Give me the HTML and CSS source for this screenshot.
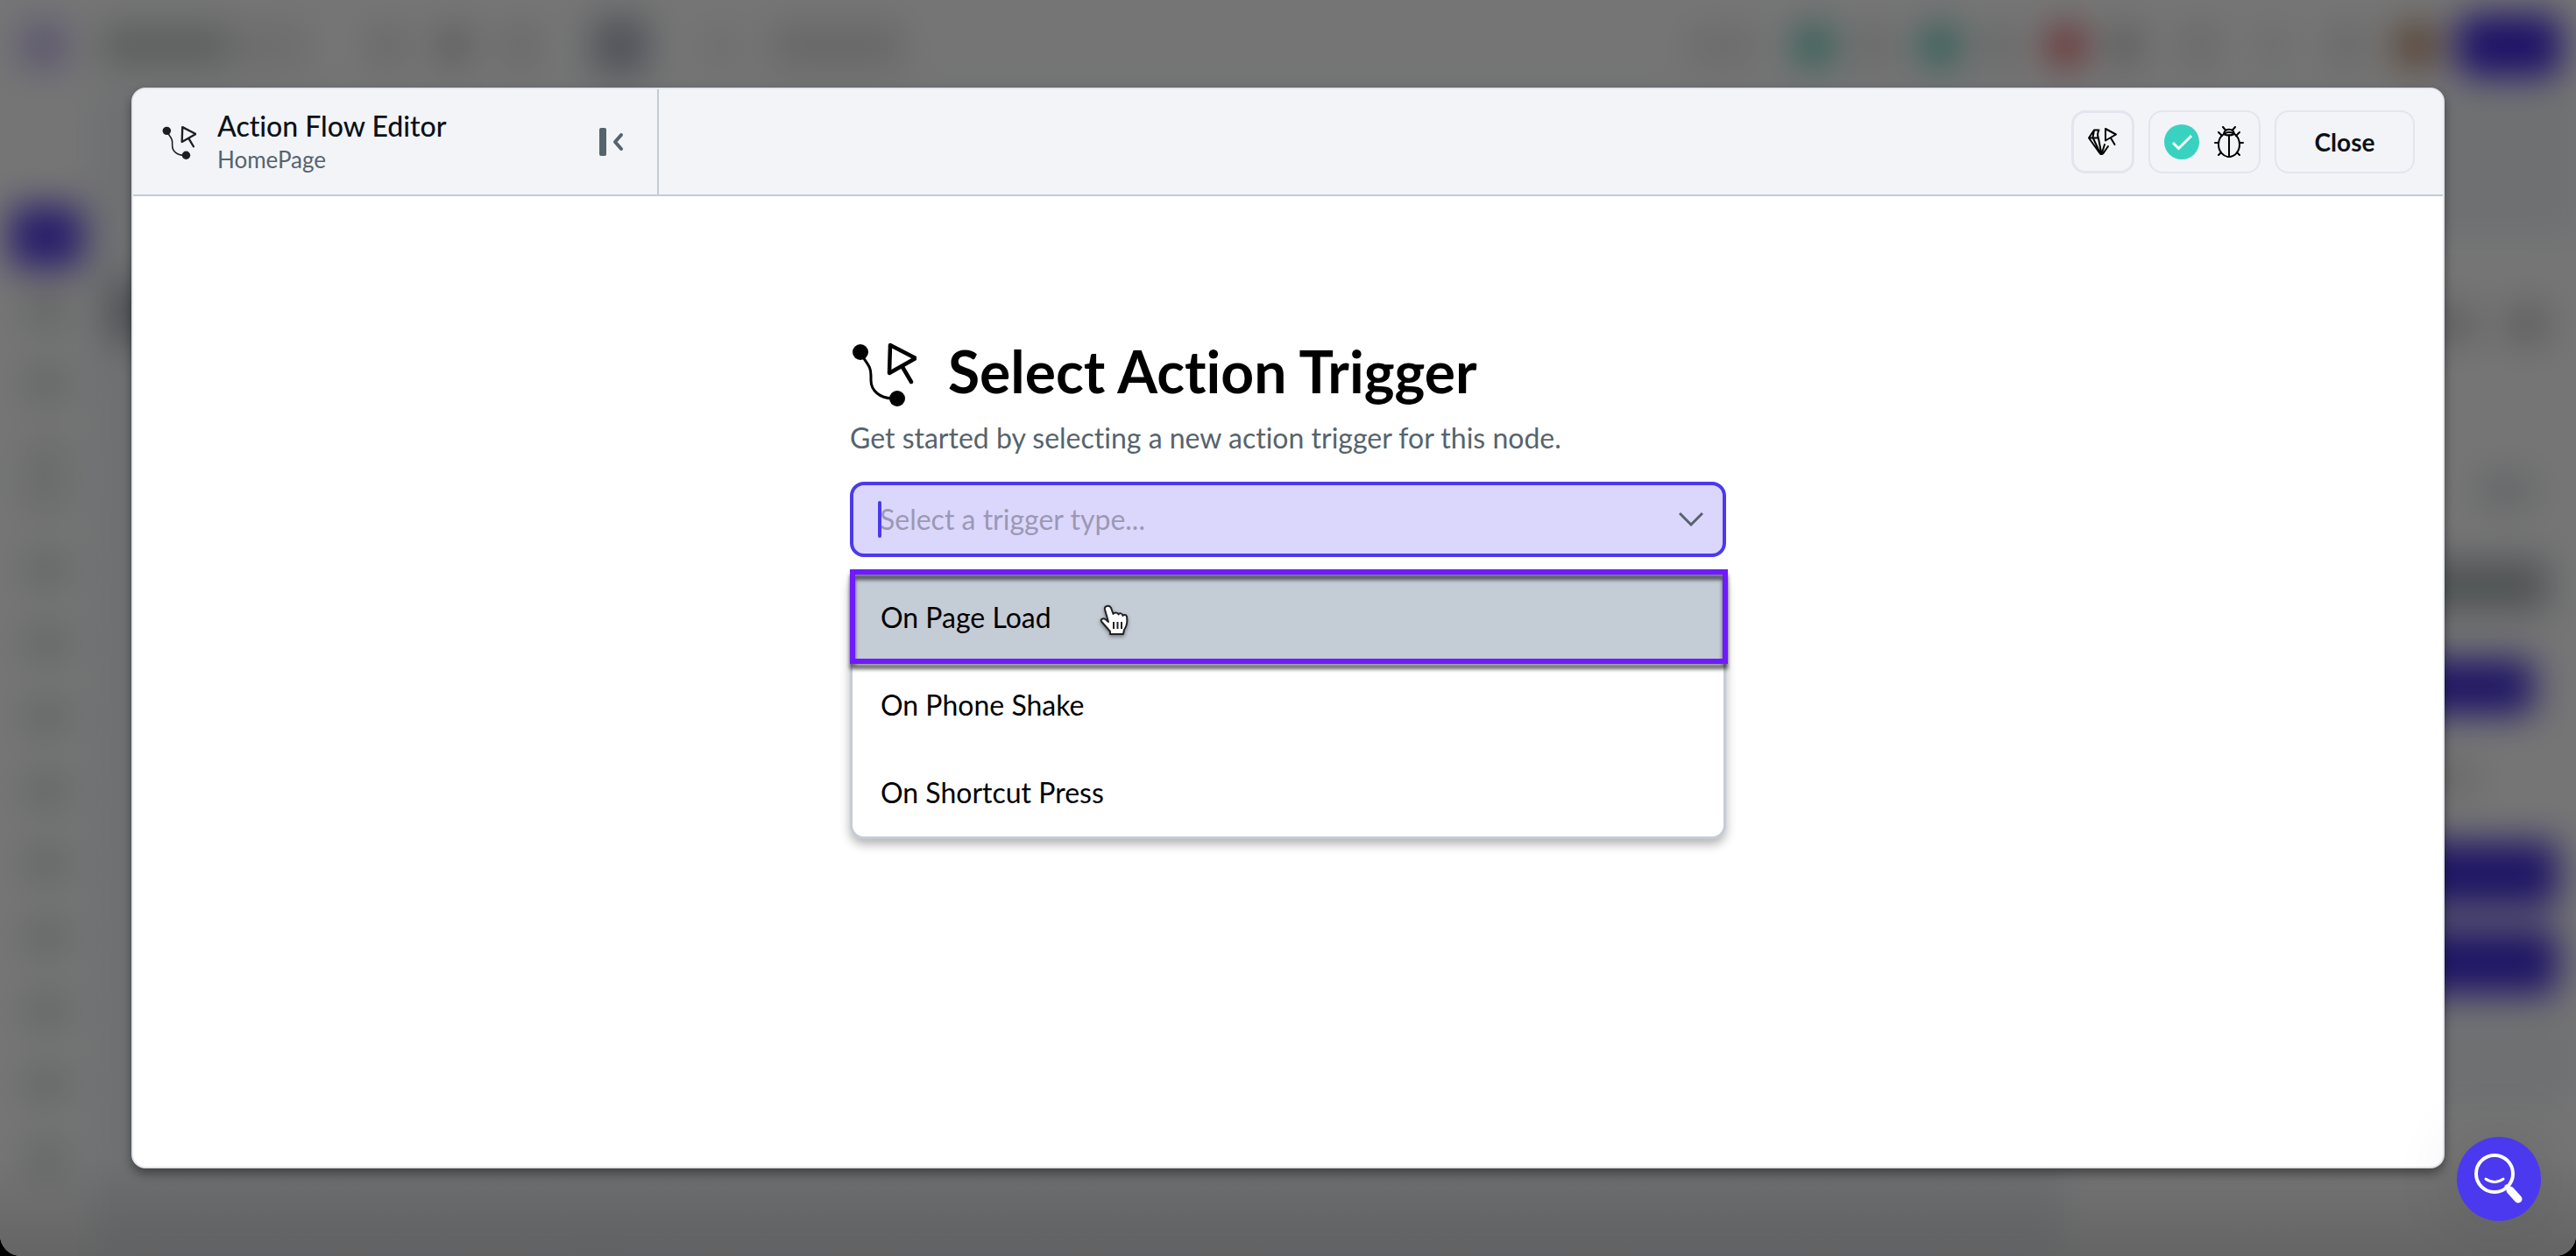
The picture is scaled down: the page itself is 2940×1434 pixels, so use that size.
FILE: index.html
```html
<!DOCTYPE html>
<html lang="en">
<head>
<meta charset="utf-8">
<meta name="viewport" content="width=device-width, initial-scale=1">
<title>Action Flow Editor</title>
<link rel="stylesheet" href="styles.css">
</head>
<body>
<svg class="sprite" aria-hidden="true">
  <symbol id="flow" viewBox="0 0 76 76">
    <circle cx="12" cy="14" r="9" fill="currentColor"/>
    <circle cx="54" cy="67" r="9" fill="currentColor"/>
    <path d="M15 20C22 30 24 32 24 41V46C24 58 34 67 50 67" fill="none" stroke="currentColor" stroke-width="3"/>
    <path d="M46 6L45 38L75 21Z M60 31L70 48" fill="none" stroke="currentColor" stroke-width="4.500" stroke-linejoin="round" stroke-linecap="round"/>
  </symbol>
</svg>
<div class="window">
  <div class="app" aria-hidden="true">
    <div class="topbar">
      <div class="bar-group">
        <i class="logo"></i><i class="name"></i><i class="tool"></i><i class="tool dark"></i><i class="tool"></i><i class="tool selected"></i><i class="tool faint"></i><i class="device"></i>
      </div>
      <div class="bar-group right">
        <i class="zoom"></i><i class="dot green"></i><i class="tool"></i><i class="dot green"></i><i class="tool"></i><i class="dot red"></i><i class="tool dark"></i><i class="tool spread"></i><i class="tool faint spread"></i><i class="tool spread"></i><i class="dot avatar"></i><i class="run"></i>
      </div>
    </div>
    <div class="workspace">
      <div class="rail">
        <i class="active"></i><i></i><i></i><i class="tall"></i><i></i><i></i><i></i><i></i><i></i><i></i><i></i><i></i><i></i>
      </div>
      <div class="tree"><i></i></div>
      <div class="canvas"></div>
      <div class="props">
        <div class="props-head"></div>
        <div class="props-icons"><i></i><i></i></div>
        <i class="hint"></i>
        <i class="tab"></i>
        <i class="action short"></i>
        <i class="note"></i>
        <i class="action"></i>
        <i class="action"></i>
        <div class="props-foot"></div>
      </div>
    </div>
  </div>
  <div class="scrim">
    <section class="modal" role="dialog" aria-labelledby="editor-title">
      <header class="modal-head">
        <div class="head-side">
          <svg class="flow-small"><use href="#flow"/></svg>
          <div class="titles">
            <h1 id="editor-title">Action Flow Editor</h1>
            <p>HomePage</p>
          </div>
          <button class="collapse" type="button" aria-label="Collapse panel">
            <svg viewBox="0 0 32 36"><rect x="2" y="2" width="8" height="32" rx="2" fill="currentColor"/><path d="M27 10L20 18L27 26" fill="none" stroke="currentColor" stroke-width="4" stroke-linecap="round" stroke-linejoin="round"/></svg>
          </button>
        </div>
        <div class="head-actions">
          <button class="tile square" type="button" aria-label="Generate action">
            <svg viewBox="0 0 36 36" fill="none" stroke="currentColor" stroke-width="2" stroke-linecap="round" stroke-linejoin="round"><path d="M13.500 4.500H8L2 13.500L14.500 31Q16.500 33 18.500 31L24 23M2 13.500H13M8 4.500L6.500 13L15.500 32M13.500 4.500Q11 9 13 14L16.500 32L20 21"/><path d="M21 3V16.500L33 9.500ZM27 13.500L31.500 21"/></svg>
          </button>
          <div class="tile status">
            <svg class="check" viewBox="0 0 40 40" role="img" aria-label="No issues"><circle cx="20" cy="20" r="20" fill="#39d2c0"/><path d="M10 21L16.500 27.500L31 13" fill="none" stroke="#fff" stroke-width="3"/></svg>
            <button class="bug" type="button" aria-label="Debug">
              <svg viewBox="0 0 36 36" fill="none" stroke="currentColor" stroke-width="2" stroke-linecap="round"><ellipse cx="18" cy="21" rx="12" ry="14"/><path d="M12 9C13 2 23 2 24 9C20 11 16 11 12 9ZM18 10V35M11 1L14 4.500M25 1L22 4.500M6 7L10 11M30 7L26 11M2 19H6M30 19H34M6 33L9 30M30 33L27 30"/></svg>
            </button>
          </div>
          <button class="tile close" type="button">Close</button>
        </div>
      </header>
      <main class="trigger">
        <div class="headline">
          <svg class="flow-large"><use href="#flow"/></svg>
          <h2>Select Action Trigger</h2>
        </div>
        <label class="lead" for="trigger-type">Get started by selecting a new action trigger for this node.</label>
        <div class="combo">
          <div class="field">
            <input id="trigger-type" type="text" role="combobox" aria-expanded="true" aria-controls="trigger-list" placeholder="Select a trigger type...">
            <span class="caret"></span>
            <svg class="chevron" viewBox="0 0 28 16"><path d="M1 1L14 14L27 1" fill="none" stroke="currentColor" stroke-width="3"/></svg>
          </div>
          <div class="menu" id="trigger-list" role="listbox">
            <button class="option hovered" type="button" role="option">On Page Load</button>
            <button class="option" type="button" role="option">On Phone Shake</button>
            <button class="option" type="button" role="option">On Shortcut Press</button>
            <span class="marker"></span>
            <svg class="pointer" viewBox="0 0 34 38"><path d="M9.500 2C7.500 2 6.500 4 7 6L11 20L7.500 17C5 15.500 1.500 17 3 19.500L13 31V34H28L29 29C32 25 33 20 32 14C31.500 11.500 28 11.500 27.500 13C27 10 23.500 9.500 22.500 11.500C21.500 9 18 9 16.500 11L14 4C13 2 11 1.500 9.500 2Z" fill="#fff" stroke="#222" stroke-width="2" stroke-linejoin="round"/><path d="M17 20V28M21.500 20V28M26 20V28" stroke="#222" stroke-width="2"/></svg>
          </div>
        </div>
      </main>
    </section>
  </div>
  <button class="help" type="button" aria-label="Search help">
    <svg viewBox="0 0 96 96" fill="none" stroke="#fff" stroke-linecap="round"><circle cx="43" cy="42" r="21" stroke-width="4"/><path d="M33 48Q43 55 53 48" stroke-width="3"/><path d="M57 57L60 60" stroke-width="5"/><path d="M61 61L70 71" stroke-width="9"/></svg>
  </button>
</div>
</body>
</html>
```
FILE: styles.css
```css
* { box-sizing: border-box; }

html { background: #000; }

body {
  margin: 0;
  font-family: Lato, "Open Sans", sans-serif;
  font-variant-ligatures: none;
  color: #0b1116;
}

h1, h2, p { margin: 0; }

button {
  padding: 0;
  border: 0;
  background: none;
  color: inherit;
  font: inherit;
  cursor: pointer;
}

svg { display: block; flex: none; }

.sprite { position: absolute; width: 0; height: 0; }

.window {
  position: relative;
  display: grid;
  min-height: 100vh;
  border-radius: 0 0 24px 24px;
  overflow: hidden;
  background: #fff;
}

.app, .scrim { grid-area: 1 / 1; min-width: 0; }

/* Application behind the dialog */
.app {
  display: flex;
  flex-direction: column;
  filter: blur(20px);
}

.app i { display: block; flex: none; }

.topbar {
  display: flex;
  justify-content: space-between;
  height: 104px;
  padding: 0 16px 0 24px;
}

.bar-group { display: flex; align-items: center; gap: 40px; }
.bar-group.right { gap: 26px; }
.logo { width: 52px; height: 52px; background: #c9bdf2; }
.name { width: 236px; height: 50px; margin-right: 32px; background: linear-gradient(90deg, #ccd0d0 60%, #ececec 60%); }
.tool { width: 36px; height: 40px; background: #dcdcdc; }
.tool.dark { background: #c4c4c4; }
.tool.faint { background: #ececec; }
.tool.selected { width: 64px; height: 64px; margin: 0 24px; background: #afb5c2; }
.device { width: 150px; height: 50px; background: #e2e2e2; }
.zoom { width: 76px; height: 36px; margin-right: 16px; background: #e6e6e6; }
.dot { width: 48px; height: 48px; border-radius: 50%; }
.green { background: #62ccba; }
.right .tool + .dot { margin-left: 8px; }
.right .spread { margin-left: 22px; }
.dot.red { background: #e8666a; }
.dot.avatar { width: 56px; height: 56px; background: #bf9578; }
.run { width: 120px; height: 72px; margin-left: -8px; border-radius: 16px; background: #4128e0; }

.workspace { display: flex; flex: 1; }

.rail {
  display: flex;
  flex-direction: column;
  align-items: center;
  gap: 44px;
  width: 106px;
  padding-top: 130px;
}
.rail i { width: 44px; height: 40px; background: #d6dada; }
.rail .active { width: 84px; height: 72px; margin-bottom: -16px; border-radius: 12px; background: #5840e8; }
.rail .tall { height: 84px; background: #e4e6e6; }

.tree { width: 578px; padding-top: 216px; border-right: 4px solid #dfe2e6; background: #f1f4f8; }
.tree i { height: 72px; margin-left: 16px; background: #b0b6be; }
.canvas { flex: 1; background: #f1f4f8; }

.props { width: 584px; }
.props-head { height: 164px; margin-bottom: 80px; background: #f1f4f8; }
.props-icons { display: flex; justify-content: flex-end; gap: 36px; padding-right: 32px; }
.props-icons i { width: 48px; height: 44px; background: #cdcdcd; }
.props .hint { width: 64px; height: 40px; margin: 148px 48px 0 auto; background: #dcdfe2; }
.props .tab { height: 60px; margin: 58px 32px 0 0; background: #b0b7bb; }
.props .action { height: 76px; margin: 0 20px 24px 0; border-radius: 12px; background: #4430dc; }
.props .action.short { height: 64px; margin: 54px 48px 52px 0; }
.props .note { height: 40px; width: 470px; margin-bottom: 52px; background: #e2e4e2; }
.props-foot { height: 100px; background: #f1f4f8; }

/* Dialog */
.scrim {
  position: relative;
  display: flex;
  padding: 100px 150px;
  background: linear-gradient(transparent 92%, rgba(0, 0, 0, .14)), rgba(0, 0, 0, .54);
}

.modal {
  flex: 1;
  min-width: 0;
  border: 2px solid #e3e6ee;
  border-radius: 16px;
  overflow: hidden;
  background: #fff;
  box-shadow: 0 6px 12px rgba(0, 0, 0, .4);
}

.modal-head {
  display: flex;
  justify-content: space-between;
  height: 122px;
  border-bottom: 2px solid #c4ccd6;
  background: #f2f4f8;
}

.head-side {
  display: flex;
  align-items: center;
  width: 600px;
  padding: 0 36px 0 32px;
  border-right: 2px solid #c4ccd6;
}
.flow-small { width: 40px; height: 40px; color: #1c1f21; }
.titles { flex: 1; padding-left: 24px; }
.titles h1 { font-size: 32px; line-height: 40px; font-weight: 500; }
.titles p { font-size: 26px; line-height: 36px; color: #57636c; }
.collapse { color: #57636c; }
.collapse svg { width: 32px; height: 36px; }

.head-actions { display: flex; align-items: center; gap: 16px; padding-right: 32px; }
.tile {
  display: flex;
  align-items: center;
  justify-content: center;
  height: 72px;
  border: 2px solid #e3e5ee;
  border-radius: 16px;
}
.square { width: 72px; border-width: 3px; color: #000; }
.square svg, .bug svg { width: 36px; height: 36px; }
.status { gap: 16px; width: 128px; color: #000; }
.check { width: 40px; height: 40px; }
.close { width: 160px; font-size: 28px; font-weight: 700; }

.trigger { width: 1000px; max-width: 100%; margin: 0 auto; padding-top: 162px; color: #000; }
.headline { display: flex; align-items: center; gap: 36px; height: 80px; }
.flow-large { width: 76px; height: 76px; }
.headline h2 { font-size: 66px; line-height: 76px; font-weight: 700; padding-bottom: 4px; }
.lead { display: block; padding-top: 14px; font-size: 32px; line-height: 40px; color: #57636c; }

.combo { padding-top: 30px; }
.field {
  position: relative;
  display: flex;
  align-items: center;
  height: 86px;
  padding: 0 22px 0 30px;
  border: 4px solid #4b39ef;
  border-radius: 16px;
  background: #dbd7fc;
}
.field input {
  flex: 1;
  min-width: 0;
  padding: 0;
  border: 0;
  outline: 0;
  background: none;
  font: 32px/40px Lato, "Open Sans", sans-serif;
}
.field input::placeholder { color: #9c98b4; opacity: 1; }
.caret { position: absolute; left: 28px; top: 18px; width: 4px; height: 42px; border-radius: 2px; background: #4b39ef; }
.chevron { width: 28px; height: 16px; color: #57636c; }

.menu {
  position: relative;
  margin-top: 16px;
  border: 3px solid #c4ccd6;
  border-radius: 16px;
  background: #fff;
  box-shadow: 0 6px 12px rgba(0, 0, 0, .3);
}
.option {
  display: block;
  width: 100%;
  height: 100px;
  padding-left: 32px;
  font-size: 32px;
  line-height: 40px;
  text-align: left;
}
.hovered { background: #c4ccd6; }
.marker {
  position: absolute;
  inset: -5px -5px auto -3px;
  height: 108px;
  border: 6px solid #6f1aff;
  filter: drop-shadow(0 6px 2px rgba(0, 0, 0, .6));
  pointer-events: none;
}
.pointer { position: absolute; left: 281px; top: 35px; width: 34px; height: 38px; filter: drop-shadow(0 2px 2px rgba(0, 0, 0, .4)); }

.help {
  position: absolute;
  right: 40px;
  bottom: 40px;
  width: 96px;
  height: 96px;
  border-radius: 50%;
  background: #4b39ef;
  box-shadow: 0 0 80px rgba(0, 0, 0, .12);
}
```
